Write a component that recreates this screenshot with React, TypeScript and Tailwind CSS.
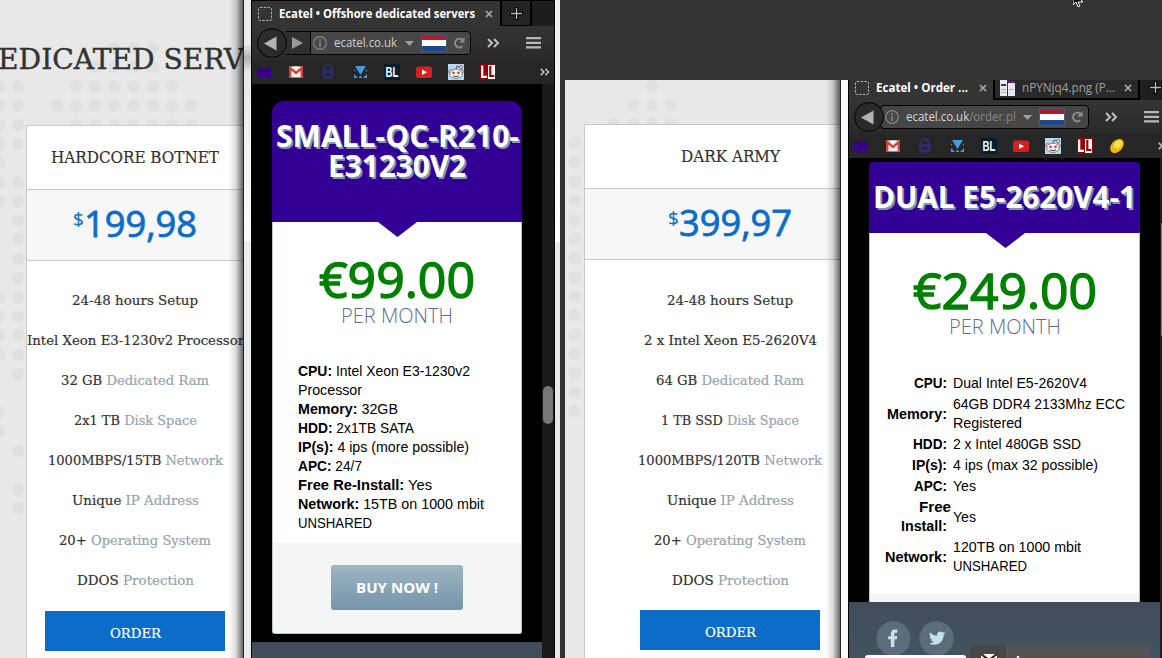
import { useLayoutEffect, useRef, useState, type ReactNode } from "react";

const slab = "font-['DejaVu_Serif',serif]";
const sans = "font-['Open_Sans',sans-serif]";
const arial = "font-['Liberation_Sans',sans-serif]";

/* One line of text, scaled horizontally to fill the given width. */
function Fit({ w, children, className = "" }: { w: number; children: ReactNode; className?: string }) {
  const ref = useRef<HTMLSpanElement>(null);
  const [scale, setScale] = useState(1);
  useLayoutEffect(() => {
    if (!ref.current) return;
    ref.current.style.transform = "none";
    const s = w / ref.current.getBoundingClientRect().width;
    ref.current.style.transform = `scaleX(${s})`;
    setScale(s);
  }, [w]);
  return (
    <span className={`block shrink-0 text-left ${className}`} style={{ width: w }}>
      <span ref={ref} className="inline-block origin-left whitespace-pre" style={{ transform: `scaleX(${scale})` }}>
        {children}
      </span>
    </span>
  );
}

type Dot = [number, number];
const leftDots: Dot[] = [
  ...[114, 133.5, 153].map((x): Dot => [x, 48]),
  ...[95, 114, 133.5, 153].map((x): Dot => [x, 67]),
  ...[-1, 18, 76, 95, 114, 133.5, 153, 172].map((x): Dot => [x, 86.5]),
  ...[-1, 18, 57, 76, 95, 114, 133.5, 153, 172, 191].map((x): Dot => [x, 105.5]),
  ...[-1, 18, 76, 95, 114, 133.5, 153, 172, 191].map((x): Dot => [x, 125]),
  ...[144, 182.5, 201.5, 297, 316.5, 335.5, 355].flatMap((y): Dot[] => [[-1, y], [18, y]]),
  ...[163, 412.5, 431.5].map((y): Dot => [-1, y]),
  ...[220.5, 239.5, 259, 278, 374, 451, 489, 508].map((y): Dot => [18, y]),
];
const rightDots: Dot[] = [
  [87, 6], [68, 25], [87, 25], [106, 25], [48, 44], [68, 44], [87, 44], [106, 44],
  ...[63, 82, 101.5, 120.5, 140, 159, 178, 197.5, 216.5, 235.5, 255, 274, 293, 312.5, 331.5].map((y): Dot => [10, y]),
];

function Dots({ dots }: { dots: Dot[] }) {
  return (
    <svg className="pointer-events-none absolute inset-0 h-full w-full" aria-hidden>
      {dots.map(([x, y]) => (
        <circle key={`${x}-${y}`} cx={x} cy={y} r={6.2} fill="#e0e0e0" />
      ))}
    </svg>
  );
}

type Row = { strong: string; soft?: string; w: number };

function PlanCard({ name, nameW, price, rows, className, tail }: {
  name: string; nameW: number; price: string; rows: Row[]; className: string; tail: string;
}) {
  return (
    <div className={`relative flex shrink-0 flex-col border border-[#c9c9c9] bg-white text-[#333] [-webkit-text-stroke:0.2px] ${slab} ${className}`}>
      <div className="flex h-[63px] items-center justify-center pt-0.5 text-[16.5px]">
        <Fit w={nameW}>{name}</Fit>
      </div>
      <div className={`flex h-[72px] justify-center border-y border-[#c9c9c9] bg-[#f7f7f7] pt-1.5 text-[#0b6dc7] ${sans}`}>
        <span className="pt-2.5 text-[19px] leading-[26px]">$</span>
        <Fit w={113} className="text-[36px] leading-[56px] [-webkit-text-stroke:0.8px]">{price}</Fit>
      </div>
      <div className={`flex flex-col items-center ${tail}`}>
        {rows.map((r) => (
          <div key={r.strong} className="flex h-10 items-center text-[13.5px] leading-5">
            <Fit w={r.w}>
              {r.strong}
              {r.soft && <span className="text-[#98a2ac]"> {r.soft}</span>}
            </Fit>
          </div>
        ))}
      </div>
      <button className="flex h-10 w-[180px] items-center justify-center self-center bg-[#0b6dc7] pt-1 text-[13.5px] text-white">
        <Fit w={51}>ORDER</Fit>
      </button>
    </div>
  );
}

function EdgeShadow() {
  return <div className="absolute inset-y-0 right-0 w-[14px] bg-linear-to-r from-transparent via-black/15 to-black/60" />;
}

function PlaceholderIcon() {
  return (
    <svg width="14" height="14" viewBox="0 0 14 14" className="shrink-0">
      <rect x=".5" y=".5" width="13" height="13" rx="1.5" fill="none" stroke="#b5b5b5" strokeDasharray="2.4 1.3" />
    </svg>
  );
}
function CloseIcon() {
  return (
    <svg width="8" height="8" viewBox="0 0 8 8" className="shrink-0">
      <path d="M1 1 7 7M7 1 1 7" stroke="#aaa" strokeWidth="1.7" />
    </svg>
  );
}
function PlusIcon() {
  return (
    <svg width="13" height="13" viewBox="0 0 13 13" className="shrink-0">
      <path d="M6.5 0v13M0 6.5h13" stroke="#000" strokeWidth="3.4" />
      <path d="M6.5 1v11M1 6.5h11" stroke="#bbb" strokeWidth="1.3" />
    </svg>
  );
}
function Chevrons({ small = false }: { small?: boolean }) {
  return (
    <svg width={small ? 10 : 13} height={small ? 8 : 10} viewBox="0 0 13 10" className="shrink-0">
      <path d="M1 1l4 4-4 4M7 1l4 4-4 4" fill="none" stroke="#bdbdbd" strokeWidth="2.1" />
    </svg>
  );
}
function MenuIcon() {
  return (
    <svg width="15" height="12" viewBox="0 0 15 12" className="shrink-0">
      <path d="M0 1.2h15M0 5.8h15M0 10.4h15" stroke="#b8b8b8" strokeWidth="2.2" />
    </svg>
  );
}
function BackButton() {
  return (
    <div className="relative z-10 flex size-[30px] shrink-0 items-center justify-center rounded-full border border-black bg-[#2b2b2b]">
      <svg width="13" height="15" viewBox="0 0 13 15" className="-ml-1">
        <path d="M12.500 .5v14L0 7.500z" fill="#b3b3b3" />
      </svg>
    </div>
  );
}
function AddressEnd() {
  return (
    <>
      <svg width="9" height="5" viewBox="0 0 9 5" className="shrink-0"><path d="M0 0h9L4.500 5z" fill="#a0a0a0" /></svg>
      <svg width="26" height="18" viewBox="0 0 26 18" className="ml-[7px] shrink-0">
        <path fill="#4c5c70" d="M0 0h26v18H0z" />
        <path fill="#b01c2e" d="M1 1h24v5H1z" /><path fill="#fff" d="M1 6h24v6H1z" /><path fill="#21468b" d="M1 12h24v5H1z" />
      </svg>
      <svg width="12" height="12" viewBox="0 0 12 12" className="ml-[6px] shrink-0">
        <path d="M9.200 9.300A4.300 4.300 0 1 1 9.300 3" fill="none" stroke="#8d8d8d" strokeWidth="2" />
        <path d="M11.500 0v5.500H6z" fill="#8d8d8d" />
      </svg>
    </>
  );
}
function InfoIcon() {
  return (
    <svg width="14" height="14" viewBox="0 0 14 14" className="shrink-0">
      <circle cx="7" cy="7" r="6.300" fill="none" stroke="#858585" strokeWidth="1.200" />
      <path d="M7 3v2M7 6.200v4.800" stroke="#858585" strokeWidth="1.600" />
    </svg>
  );
}

function Bookmarks({ gold = false }: { gold?: boolean }) {
  return (
    <div className="flex items-center gap-4">
      <svg width="16" height="16" viewBox="0 0 16 16">
        <path fill="#3c0090" d="M1 3h14v10H1z" /><path d="M1 4l7 4 7-4" fill="none" stroke="#20103a" strokeWidth="1.300" />
      </svg>
      <svg width="16" height="16" viewBox="0 0 16 16">
        <path fill="#eee" d="M1 2.500h14v11H1z" /><path d="M2.200 13.500V4L8 9l5.800-5v9.500" fill="none" stroke="#d54338" strokeWidth="2.400" />
        <path d="M4.500 2.500h7L8 6z" fill="#f8f8f8" />
      </svg>
      <svg width="16" height="16" viewBox="0 0 16 16">
        <path d="M4 7V5a4 4 0 0 1 8 0v2" fill="none" stroke="#302d64" strokeWidth="2" />
        <path d="M2 6h12v6q-2 3-6 3.500Q4 15 2 12z" fill="#302d64" /><path d="M5 10.500h6" stroke="#20203a" strokeWidth="2" />
      </svg>
      <svg width="16" height="16" viewBox="0 0 16 16">
        <path fill="#449bd5" d="M3 2h11L8.500 11zM2 5l1 1.800-1 1zM15 5v3l-1.200-1.200zM2 10l4 4H2zM15 10v4h-4zM7 13l1.500-1 1.500 1v1H7z" />
      </svg>
      <svg width="16" height="16" viewBox="0 0 16 16">
        <path fill="#061d2c" d="M0 0h16v16H0z" />
        <text x="1.500" y="13" textLength="13" lengthAdjust="spacingAndGlyphs" fontFamily="Liberation Sans" fontWeight="700" fontSize="14" fill="#f5fbff">BL</text>
      </svg>
      <svg width="16" height="16" viewBox="0 0 16 16">
        <rect y="2.500" width="16" height="11.500" rx="2.500" fill="#d51f20" /><path d="M6 5.500v5.500L11 8.200z" fill="#fff" />
      </svg>
      <svg width="16" height="16" viewBox="0 0 16 16">
        <path fill="#b8d8f0" d="M0 0h16v16H0z" />
        <path d="M8 5l1-3 3 1" fill="none" stroke="#555" /><circle cx="13" cy="3" r="1.500" fill="#fff" stroke="#555" strokeWidth=".8" />
        <circle cx="2.500" cy="7.500" r="1.800" fill="#eee" stroke="#555" strokeWidth=".8" /><circle cx="13.500" cy="7.500" r="1.800" fill="#eee" stroke="#555" strokeWidth=".8" />
        <ellipse cx="8" cy="9.800" rx="6.200" ry="4.600" fill="#fff" stroke="#666" strokeWidth=".8" />
        <circle cx="5.500" cy="8.800" r="1.400" fill="#f0392b" /><circle cx="10.500" cy="8.800" r="1.400" fill="#f0392b" />
        <path d="M5 11.800q3 2 6 0" fill="none" stroke="#333" />
      </svg>
      <svg width="16" height="16" viewBox="0 0 16 16">
        <path fill="#930006" d="M0 0h16v16H0z" />
        <path d="M2.200 1.500v11.300H7" fill="none" stroke="#fff" strokeWidth="2.200" />
        <path fill="#fff" d="M8 1h7v14H8z" /><path d="M10.300 2v10h4" fill="none" stroke="#930006" strokeWidth="2.200" />
      </svg>
      {gold && (
        <svg width="16" height="16" viewBox="0 0 16 16">
          <ellipse cx="8" cy="8" rx="5.600" ry="8" transform="rotate(42 8 8)" fill="#f5b50c" />
          <ellipse cx="9" cy="6.500" rx="3.200" ry="5" transform="rotate(42 9 6.500)" fill="#ffe34d" />
        </svg>
      )}
    </div>
  );
}

function OfferHead({ title, lines, className }: { title: string[]; lines: number[]; className: string }) {
  return (
    <div className={`relative flex flex-col items-center bg-[#330096] text-[30px] leading-[30px] font-bold text-white [text-shadow:2px_2px_0_#7b98ac] ${sans} ${className}`}>
      {title.map((t, i) => (
        <Fit key={t} w={lines[i]}>{t}</Fit>
      ))}
      <svg width="39" height="15" viewBox="0 0 39 15" className="absolute top-full left-1/2 -ml-[19px]">
        <path d="M0 0h39L19.500 15z" fill="#330096" />
      </svg>
    </div>
  );
}

function OfferPrice({ price, w, className }: { price: string; w: number; className: string }) {
  return (
    <div className={`flex flex-col items-center ${sans} ${className}`}>
      <Fit w={w} className="text-[48.500px] leading-[50px] text-[#008000] [-webkit-text-stroke:1.4px_#008000]">{price}</Fit>
      <Fit w={112} className="text-[19.500px] leading-[23px] font-light text-[#5f6b8c]">PER MONTH</Fit>
    </div>
  );
}

function Spec({ label, w, children }: { label: string; w: number; children: string }) {
  return (
    <Fit w={w}>
      <b>{label}</b> {children}
    </Fit>
  );
}

function SmallBrowser() {
  return (
    <div className="flex w-[304px] shrink-0 flex-col border-x border-black bg-black">
      <div className="flex h-[26px] shrink-0 border-t border-black bg-[#1d1d1d]">
        <div className={`flex w-[248px] items-center bg-[#343434] pl-1.5 text-[12px] leading-4 font-bold text-white ${sans}`}>
          <PlaceholderIcon />
          <Fit w={196} className="mr-2.5 ml-[7px]">Ecatel • Offshore dedicated servers</Fit>
          <CloseIcon />
        </div>
        <div className="flex w-8 items-center justify-center border-x-2 border-b border-black bg-[#242424]"><PlusIcon /></div>
      </div>
      <div className="flex h-[34px] shrink-0 items-center bg-linear-to-b from-[#343434] to-[#2a2a2a] pl-[5px]">
        <BackButton />
        <div className="-ml-1 flex h-6 w-[188px] items-center rounded-sm border border-black bg-[#464646]">
          <div className="flex h-full w-[27px] items-center justify-center border-r border-black bg-[#303030]">
            <svg width="11" height="12" viewBox="0 0 11 12"><path d="M0 0v12L11 6z" fill="#999" /></svg>
          </div>
          <div className="flex items-center pl-[2px]"><InfoIcon />
            <Fit w={63} className={`mr-[8px] ml-[7px] text-[12px] leading-4 text-[#d0d0d0] ${sans}`}>ecatel.co.uk</Fit>
            <AddressEnd />
          </div>
        </div>
        <div className="ml-4 flex items-center gap-[26px]"><Chevrons /><MenuIcon /></div>
      </div>
      <div className="flex h-6 shrink-0 items-center justify-between bg-[#262626] pr-1 pl-1">
        <Bookmarks /><Chevrons small />
      </div>
      <div className="flex min-h-0 flex-1">
        <div className="flex w-[290px] shrink-0 flex-col">
          <div className="mt-[17px] ml-5 flex w-[250px] shrink-0 flex-col">
            <OfferHead title={["SMALL-QC-R210-", "E31230V2"]} lines={[243, 138]} className="h-[121px] rounded-t-[12px] pt-5" />
            <div className="flex h-[412px] flex-col rounded-b-[3px] border-x border-b border-[#bcc4bc] bg-white">
              <OfferPrice price="€99.00" w={156} className="pt-[32px]" />
              <div className={`flex flex-col pt-[35px] pl-[25px] text-[14px] leading-[19px] text-black ${arial}`}>
                <Spec label="CPU:" w={172}>Intel Xeon E3-1230v2</Spec>
                <Fit w={64}>Processor</Fit>
                <Spec label="Memory:" w={100}>32GB</Spec>
                <Spec label="HDD:" w={116}>2x1TB SATA</Spec>
                <Spec label="IP(s):" w={171}>4 ips (more possible)</Spec>
                <Spec label="APC:" w={64}>24/7</Spec>
                <Spec label="Free Re-Install:" w={134}>Yes</Spec>
                <Spec label="Network:" w={186}>15TB on 1000 mbit</Spec>
                <Fit w={74}>UNSHARED</Fit>
              </div>
              <div className="mt-auto flex h-[90px] justify-center bg-[#f4f5f5] pt-[22px]">
                <button className={`flex h-[45px] w-[132px] items-center justify-center rounded-[3px] bg-linear-to-b from-[#9eb5c3] to-[#7495aa] text-[15px] font-bold text-white ${sans}`}>
                  <Fit w={82}>BUY NOW !</Fit>
                </button>
              </div>
            </div>
          </div>
          <div className="mt-auto h-4 bg-[#414c5a]" />
        </div>
        <div className="flex-1 bg-[#1a1a1a] pt-[302px]">
          <div className="ml-px h-[38px] w-2.5 rounded-full bg-[#777]" />
        </div>
      </div>
    </div>
  );
}

function TableRow({ label, value }: { label: { t: string; w: number; free?: boolean }[]; value: { t: string; w: number }[] }) {
  return (
    <div className="flex items-center gap-1.5">
      <div className="flex w-[77px] flex-col items-end font-bold">
        {label.map((l) => <Fit key={l.t} w={l.w} className={l.free ? "-mr-1" : ""}>{l.t}</Fit>)}
      </div>
      <div>{value.map((v) => <Fit key={v.t} w={v.w}>{v.t}</Fit>)}</div>
    </div>
  );
}

function DualBrowser() {
  return (
    <div className="flex w-[314px] shrink-0 flex-col overflow-hidden border-l border-black bg-black">
      <div className={`flex h-[20px] shrink-0 bg-[#1e1e1e] text-[12px] leading-4 ${sans}`}>
        <div className="flex w-[146px] items-center bg-[#343434] pb-[5px] pl-1.5 font-bold text-white">
          <PlaceholderIcon />
          <Fit w={92} className="mr-[11px] ml-[7px]">Ecatel • Order ...</Fit><CloseIcon />
        </div>
        <div className="flex w-[149px] items-center border-x-2 border-b-2 border-black bg-[#292929] pb-[3px] pl-[5px] text-[#a0a0a0]">
          <svg width="16" height="16" viewBox="0 0 16 16" className="shrink-0">
            <path fill="#e8e8ee" d="M0 0h7v16H0zM8 2h7v14H8z" /><path fill="#333" d="M7 0h1v16H7z" /><path fill="#52209e" d="M8 1h7v2H8zM1 4h5v2H1z" /><path fill="#aaa" d="M1 9h5v1H1zM1 12h5v1H1zM9 9h4v1H9z" />
          </svg>
          <Fit w={93} className="mr-[9px] ml-[6px]">nPYNjq4.png (P...</Fit><CloseIcon />
        </div>
        <div className="flex items-center pb-[5px] pl-[9px]"><PlusIcon /></div>
      </div>
      <div className="flex h-[34px] shrink-0 items-center bg-linear-to-b from-[#343434] to-[#2a2a2a] pl-[5px]">
        <BackButton />
        <div className="-ml-1 flex h-6 w-[209px] shrink-0 items-center rounded-sm border border-black bg-[#464646] pl-[4px]">
          <InfoIcon />
          <Fit w={110} className={`mr-[7px] ml-[7px] text-[12px] leading-4 text-[#d8d8d8] ${sans}`}>
            ecatel.co.uk<span className="text-[#888]">/order.pl</span>
          </Fit>
          <AddressEnd />
        </div>
        <div className="ml-4 flex shrink-0 items-center gap-[26px]"><Chevrons /><MenuIcon /></div>
      </div>
      <div className="flex h-6 shrink-0 items-center bg-[#262626] pl-1">
        <Bookmarks gold />
        <div className="ml-[33px] flex"><Chevrons small /></div>
      </div>
      <div className="flex min-h-0 flex-1">
        <div className="flex w-[311px] shrink-0 flex-col">
          <div className="flex min-h-0 flex-1 flex-col pt-[4px] pl-5">
            <div className="flex w-[271px] flex-1 flex-col">
              <OfferHead title={["DUAL E5-2620V4-1"]} lines={[263]} className="h-[71px] shrink-0 rounded-t-[4px] pt-5 pr-px" />
              <div className="flex flex-1 flex-col border-x border-[#bcc4bc] bg-white">
                <OfferPrice price="€249.00" w={184} className="pt-[32px]" />
                <div className={`flex flex-col gap-0.5 pt-[36px] text-[14px] leading-[19px] text-black ${arial}`}>
                  <TableRow label={[{ t: "CPU:", w: 33 }]} value={[{ t: "Dual Intel E5-2620V4", w: 134 }]} />
                  <TableRow label={[{ t: "Memory:", w: 60 }]} value={[{ t: "64GB DDR4 2133Mhz ECC", w: 172 }, { t: "Registered", w: 69 }]} />
                  <TableRow label={[{ t: "HDD:", w: 34 }]} value={[{ t: "2 x Intel 480GB SSD", w: 128 }]} />
                  <TableRow label={[{ t: "IP(s):", w: 35 }]} value={[{ t: "4 ips (max 32 possible)", w: 145 }]} />
                  <TableRow label={[{ t: "APC:", w: 33 }]} value={[{ t: "Yes", w: 23 }]} />
                  <TableRow label={[{ t: "Free", w: 32, free: true }, { t: "Install:", w: 46 }]} value={[{ t: "Yes", w: 23 }]} />
                  <TableRow label={[{ t: "Network:", w: 62 }]} value={[{ t: "120TB on 1000 mbit", w: 128 }, { t: "UNSHARED", w: 74 }]} />
                </div>
                <div className="mt-auto h-2 bg-[#f4f5f5]" />
              </div>
            </div>
          </div>
          <div className="flex h-14 shrink-0 overflow-hidden bg-linear-to-b from-[#414c5a] to-[#425360]">
            <div className="ml-4 flex w-[105px] shrink-0 flex-col">
              <div className="flex h-[53px] gap-2 pt-[19px] pl-[11px]">
                <svg width="35" height="35" viewBox="0 0 35 35" className="shrink-0">
                  <circle cx="17.500" cy="17.500" r="17.200" fill="#5b6d79" />
                  <path d="M14.800 26v-7.800h-2.600v-3h2.600V13c0-3 1.800-4.400 4.200-4.400h2.300v3.100h-1.500c-1.100 0-1.400.5-1.400 1.500v2h2.900l-.4 3h-2.500V26z" fill="#c5e3ef" />
                </svg>
                <svg width="35" height="35" viewBox="0 0 35 35" className="shrink-0">
                  <circle cx="17.500" cy="17.500" r="17.200" fill="#5b6d79" />
                  <g transform="translate(10 9) scale(.68)">
                    <path d="M23.950 4.570a10 10 0 0 1-2.820.77 4.960 4.960 0 0 0 2.160-2.720c-.950.550-2 .950-3.130 1.180a4.920 4.920 0 0 0-8.380 4.480C7.690 8.100 4.070 6.130 1.640 3.160a4.930 4.930 0 0 0 1.520 6.570 4.900 4.900 0 0 1-2.230-.610v.060a4.920 4.920 0 0 0 3.950 4.830 5 5 0 0 1-2.210.080 4.940 4.940 0 0 0 4.600 3.420A9.870 9.870 0 0 1 0 19.540a14 14 0 0 0 7.550 2.210c9.050 0 14-7.500 14-13.980v-.640a9.900 9.900 0 0 0 2.400-2.560z" fill="#c5e3ef" />
                  </g>
                </svg>
              </div>
              <div className="h-[3px] w-[101px] rounded-t-[6px] bg-white" />
            </div>
            <div className="mt-[43px] flex h-6 w-[180px] overflow-hidden rounded-t-[4px] bg-[#545454]">
              <div className="flex w-9 justify-center bg-[#474747] pt-[9px]">
                <svg width="16" height="12" viewBox="0 0 16 12" className="ml-0.5"><path d="M0 0h16v12H0z" fill="#fff" /><path d="M0 0l8 6 8-6" fill="none" stroke="#222" strokeWidth="2" /></svg>
              </div>
              <span className={`pt-[8px] pl-2.5 text-[14px] leading-[18px] font-bold text-white ${arial}`}>l</span>
            </div>
          </div>
        </div>
        <div className="flex-1 bg-[#202020] pt-[65px]"><div className="ml-px h-[113px] rounded-l-full bg-[#777]" /></div>
      </div>
    </div>
  );
}

const leftRows: Row[] = [
  { strong: "24-48 hours Setup", w: 126 },
  { strong: "Intel Xeon E3-1230v2 Processor", w: 217 },
  { strong: "32 GB", soft: "Dedicated Ram", w: 148 },
  { strong: "2x1 TB", soft: "Disk Space", w: 123 },
  { strong: "1000MBPS/15TB", soft: "Network", w: 175 },
  { strong: "Unique", soft: "IP Address", w: 127 },
  { strong: "20+", soft: "Operating System", w: 152 },
  { strong: "DDOS", soft: "Protection", w: 117 },
];
const rightRows: Row[] = [
  { strong: "24-48 hours Setup", w: 126 },
  { strong: "2 x Intel Xeon E5-2620V4", w: 173 },
  { strong: "64 GB", soft: "Dedicated Ram", w: 148 },
  { strong: "1 TB SSD", soft: "Disk Space", w: 138 },
  { strong: "1000MBPS/120TB", soft: "Network", w: 184 },
  { strong: "Unique", soft: "IP Address", w: 127 },
  { strong: "20+", soft: "Operating System", w: 152 },
  { strong: "DDOS", soft: "Protection", w: 117 },
];

export default function App() {
  return (
    <div className="flex h-[658px] w-[1162px] overflow-hidden bg-[#333]">
      <section className="relative flex w-[243px] shrink-0 flex-col overflow-hidden bg-[#e8e8e8]">
        <Dots dots={leftDots} />
        <h1 className={`relative h-[125px] shrink-0 pt-[41px] text-[28.500px] leading-[38px] text-[#333] [-webkit-text-stroke:0.4px] ${slab}`}>
          <Fit w={246} className="-ml-0.5">EDICATED SERV</Fit>
        </h1>
        <PlanCard name="HARDCORE BOTNET" nameW={168} price="199,98" rows={leftRows} className="ml-[26px] h-[540px] w-[218px]" tail="pt-[19px] pb-[11px]" />
        <EdgeShadow />
      </section>
      <div className="flex w-2 shrink-0 flex-col border-l border-[#222] bg-[#ececec]">
        <div className="mt-[45px] h-[26px] bg-linear-to-b from-[#e5e5e5] via-[#b5b3b3] to-[#e5e5e5]" />
        <div className="h-[170px] bg-linear-to-b from-[#e8e8e8] to-white" />
      </div>
      <SmallBrowser />
      <div className="flex w-[5px] shrink-0 flex-col bg-[#e8e8e8]"><div className="h-[242px] bg-linear-to-b from-[#eee] to-white" /></div>
      <div className="flex min-w-0 flex-1 flex-col">
        <header className="h-20 shrink-0 bg-[#333]">
          <svg width="10" height="7" viewBox="0 8 10 7" className="ml-[513px]">
            <path d="M0 0v13l3-3 2 5 2-1-2-4h5z" fill="#111" stroke="#fff" />
          </svg>
        </header>
        <div className="flex min-h-0 flex-1 pl-[5px]">
          <section className="relative flex w-[275px] shrink-0 flex-col overflow-hidden bg-[#e8e8e8] pt-11">
            <Dots dots={rightDots} />
            <PlanCard name="DARK ARMY" nameW={99} price="399,97" rows={rightRows} className="ml-[19px] h-[540px] w-[292px]" tail="pt-5 pb-[10px]" />
            <EdgeShadow />
          </section>
          <div className="w-2 shrink-0 border-l border-[#222] bg-[#fafafa]" />
          <DualBrowser />
        </div>
      </div>
    </div>
  );
}
